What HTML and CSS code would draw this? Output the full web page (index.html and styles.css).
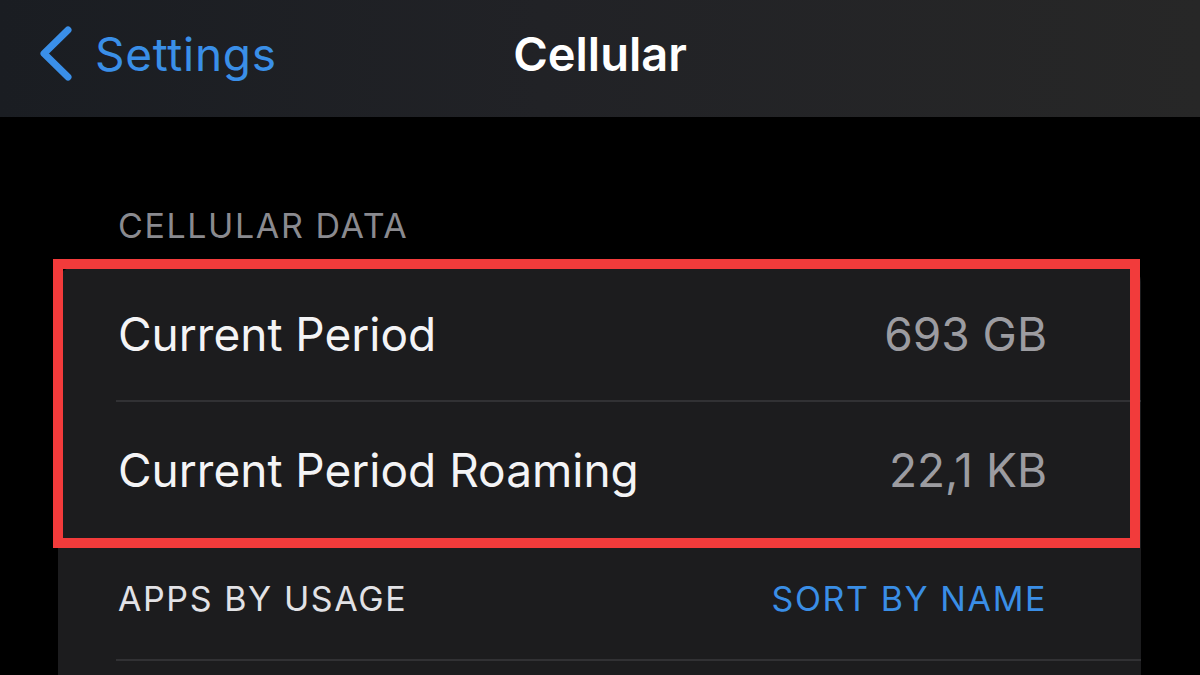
FILE: index.html
```html
<!DOCTYPE html>
<html>
<head>
  <title>Cellular</title>
  <link rel="stylesheet" href="styles.css">
</head>
<body>
  <header class="navbar">
    <a class="back" href="#">
      <svg class="chevron" width="36" height="56" viewBox="0 0 36 56">
        <path d="M31 4 L7 27.5 L31 51" />
      </svg>
      <span>Settings</span>
    </a>
    <h1 class="title">Cellular</h1>
    <div></div>
  </header>

  <div class="section-title">CELLULAR DATA</div>

  <div class="card">
    <div class="highlight">
      <div class="row row-first">
        <span class="label">Current Period</span>
        <span class="value">693 GB</span>
      </div>
      <div class="row row-second">
        <span class="label">Current Period Roaming</span>
        <span class="value">22,1 KB</span>
      </div>
    </div>
    <div class="row row-header">
      <span class="label-caps">APPS BY USAGE</span>
      <a class="link" href="#">SORT BY NAME</a>
    </div>
    <div class="row row-next"></div>
  </div>
</body>
</html>
```

FILE: styles.css
```css
html, body {
  margin: 0;
  height: 100%;
  overflow: hidden;
}
body {
  background-color: #000;
  color: #fff;
  font-family: Inter, "Noto Sans", sans-serif;
}

/* barra de navegação */
.navbar {
  height: 117px;
  display: grid;
  grid-template-columns: 1fr auto 1fr;
  align-items: center;
  padding: 0 0 10px 0;
  box-sizing: border-box;
  background: linear-gradient(90deg, #1a1d22 0%, #212226 45%, #272727 100%);
}
.back {
  display: flex;
  align-items: center;
  gap: 22px;
  padding-left: 37px;
  color: #3a8fe8;
  text-decoration: none;
  font-size: 46px;
  letter-spacing: 0.7px;
}
.chevron path {
  fill: none;
  stroke: #3a8fe8;
  stroke-width: 7;
  stroke-linecap: round;
  stroke-linejoin: round;
}
.title {
  margin: 0;
  font-size: 47px;
  font-weight: 600;
  color: #fff;
}

/* cabeçalho da seção */
.section-title {
  height: 151px;
  box-sizing: border-box;
  display: flex;
  align-items: flex-end;
  padding: 0 0 22px 118px;
  font-size: 34px;
  line-height: 40px;
  letter-spacing: 1.6px;
  color: #8a8a8f;
}

/* cartão */
.card {
  margin: 0 59px 0 58px;
  background-color: #1c1c1e;
  border-radius: 14px 14px 0 0;
}
.highlight {
  position: relative;
}
.highlight::after {
  content: "";
  position: absolute;
  top: -9px;
  left: -5px;
  right: 1px;
  bottom: -10px;
  border: 10px solid #f23b3b;
  pointer-events: none;
}
.row {
  display: flex;
  align-items: center;
  justify-content: space-between;
  margin-left: 58px;
  padding: 0 94px 0 2px;
  border-bottom: 2px solid #313134;
  box-sizing: border-box;
}
.row-first {
  height: 134px;
}
.row-second {
  height: 136px;
  border-bottom: none;
}
.row-header {
  height: 123px;
}
.row-next {
  height: 14px;
  border-bottom: none;
}
.label {
  font-size: 46px;
  color: #f4f4f6;
}
.value {
  font-size: 46px;
  color: #9c9ca1;
}
.label-caps {
  font-size: 34px;
  letter-spacing: 1.6px;
  color: #e2e2e6;
}
.link {
  font-size: 34px;
  letter-spacing: 1.6px;
  color: #3a8ee6;
  text-decoration: none;
}
```
